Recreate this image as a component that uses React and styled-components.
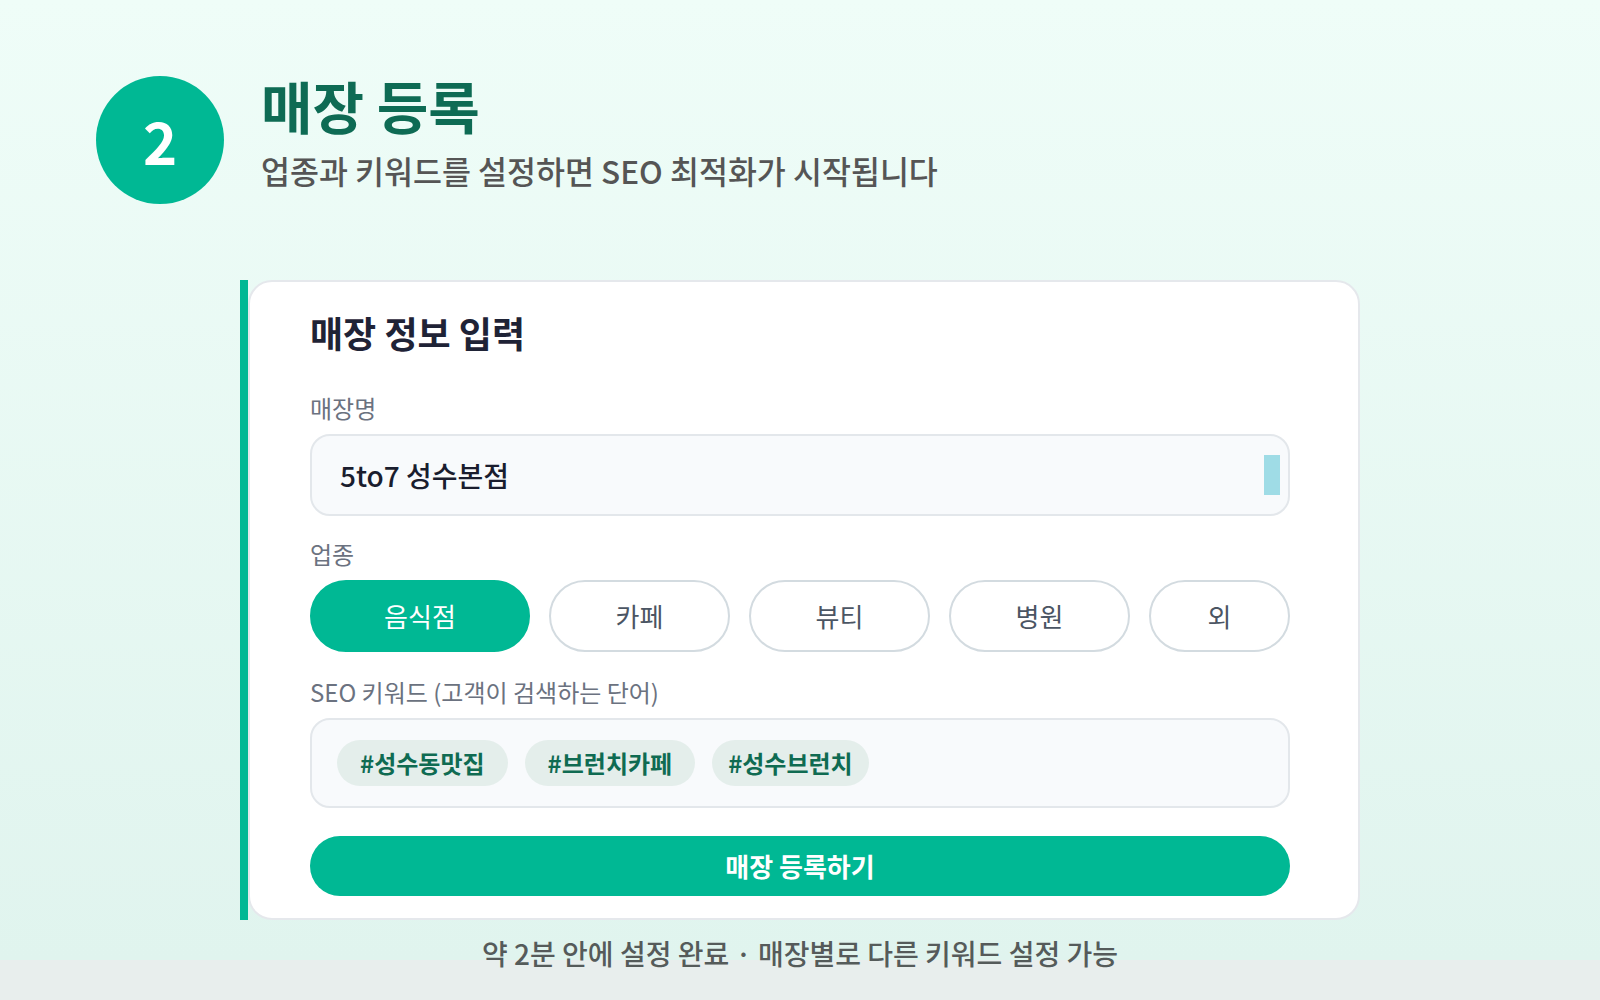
import React from 'react'
import styled, { createGlobalStyle } from 'styled-components'

const GlobalStyle = createGlobalStyle`
  html {
    height: 100%;
    background: linear-gradient(180deg, #effdf8 0px, #e0f4ee 960px, #e8eeed 960px, #e8eeed 100%);
  }
  body {
    margin: 0;
    min-height: 100%;
    font-family: "Noto Sans CJK KR", "Noto Sans", sans-serif;
  }
  * { box-sizing: border-box; }
`

const categories = ['음식점', '카페', '뷰티', '병원', '외']
const keywords = ['#성수동맛집', '#브런치카페', '#성수브런치']

const App = () => {
  return (
    <>
      <GlobalStyle />
      <Page>
        <Header>
          <StepCircle>2</StepCircle>
          <TitleBlock>
            <Title>매장 등록</Title>
            <Subtitle>업종과 키워드를 설정하면 SEO 최적화가 시작됩니다</Subtitle>
          </TitleBlock>
        </Header>

        <CardWrap>
          <AccentBar />
          <Card>
            <CardTitle>매장 정보 입력</CardTitle>

            <Field $gap={22}>
              <Label>매장명</Label>
              <InputBox>
                <span>5to7 성수본점</span>
                <Caret />
              </InputBox>
            </Field>

            <Field>
              <Label>업종</Label>
              <ChipRow>
                {categories.map((c, i) => (
                  <Chip key={c} $active={i === 0}>{c}</Chip>
                ))}
              </ChipRow>
            </Field>

            <Field>
              <Label>SEO 키워드 (고객이 검색하는 단어)</Label>
              <KeywordBox>
                {keywords.map((k, i) => (
                  <Tag key={k} $tight={i === keywords.length - 1}>{k}</Tag>
                ))}
              </KeywordBox>
            </Field>

            <SubmitButton>매장 등록하기</SubmitButton>
          </Card>
        </CardWrap>

        <FootNote>약 2분 안에 설정 완료 · 매장별로 다른 키워드 설정 가능</FootNote>
      </Page>
    </>
  )
}

export default App

const Page = styled.div`
  display: flex;
  flex-direction: column;
  padding-top: 71px;
`

const Header = styled.div`
  display: flex;
  align-items: flex-start;
  gap: 37px;
  padding-left: 96px;
`

const StepCircle = styled.div`
  width: 128px;
  height: 128px;
  margin-top: 5px;
  border-radius: 50%;
  background: #00b894;
  color: #fff;
  font-size: 58px;
  font-weight: 700;
  display: flex;
  align-items: center;
  justify-content: center;
`

const TitleBlock = styled.div`
  display: flex;
  flex-direction: column;
`

const Title = styled.h1`
  margin: 0;
  font-size: 56px;
  font-weight: 700;
  line-height: 1.2;
  color: #0e6b54;
`

const Subtitle = styled.p`
  margin: 12px 0 0;
  font-size: 31.5px;
  font-weight: 500;
  line-height: 1.3;
  color: #555;
`

const CardWrap = styled.div`
  display: flex;
  width: 1120px;
  margin: 76px auto 0;
`

const AccentBar = styled.div`
  width: 8px;
  flex-shrink: 0;
  background: #00b894;
`

const Card = styled.div`
  flex: 1;
  background: #fff;
  border: 2px solid #e5e8ec;
  border-radius: 24px;
  padding: 27px 68px 22px 60px;
`

const CardTitle = styled.h2`
  margin: 0 0 36px;
  font-size: 36px;
  font-weight: 700;
  line-height: 1.3;
  color: #1f2336;
`

const Field = styled.div`
  margin-bottom: ${p => p.$gap ?? 24}px;
`

const Label = styled.div`
  font-size: 24px;
  line-height: 32px;
  color: #6b7280;
  margin-bottom: 10px;
`

const InputBox = styled.div`
  height: 82px;
  display: flex;
  align-items: center;
  justify-content: space-between;
  padding: 0 8px 0 28px;
  border: 2px solid #e3e7eb;
  border-radius: 20px;
  background: #f8fafc;
  font-size: 28px;
  font-weight: 500;
  color: #1a1d2e;
`

const Caret = styled.span`
  width: 16px;
  height: 40px;
  background: #9fdce6;
`

const ChipRow = styled.div`
  display: grid;
  grid-template-columns: 220fr 181fr 181fr 181fr 141fr;
  gap: 19px;
`

const Chip = styled.button`
  height: 72px;
  border-radius: 999px;
  border: 2px solid ${p => (p.$active ? '#00b894' : '#d3dbe0')};
  background: ${p => (p.$active ? '#00b894' : '#fff')};
  color: ${p => (p.$active ? '#fff' : '#4b5563')};
  font-family: inherit;
  font-size: 26px;
  padding: 0;
`

const KeywordBox = styled.div`
  height: 90px;
  display: flex;
  align-items: center;
  gap: 17px;
  padding: 0 25px;
  border: 2px solid #e3e7eb;
  border-radius: 20px;
  background: #f8fafc;
`

const Tag = styled.span`
  height: 46px;
  display: flex;
  align-items: center;
  padding: 0 ${p => (p.$tight ? '16px' : '23px')};
  border-radius: 999px;
  background: #e4eeeb;
  color: #0f6b52;
  font-size: 24px;
  font-weight: 700;
`

const SubmitButton = styled.button`
  display: block;
  width: 100%;
  height: 60px;
  margin-top: 28px;
  border: none;
  border-radius: 999px;
  background: #00b894;
  color: #fff;
  font-family: inherit;
  font-size: 26px;
  font-weight: 700;
`

const FootNote = styled.p`
  margin: 15px 0 0;
  text-align: center;
  font-size: 28px;
  font-weight: 500;
  line-height: 1.3;
  color: #555b5a;
`
